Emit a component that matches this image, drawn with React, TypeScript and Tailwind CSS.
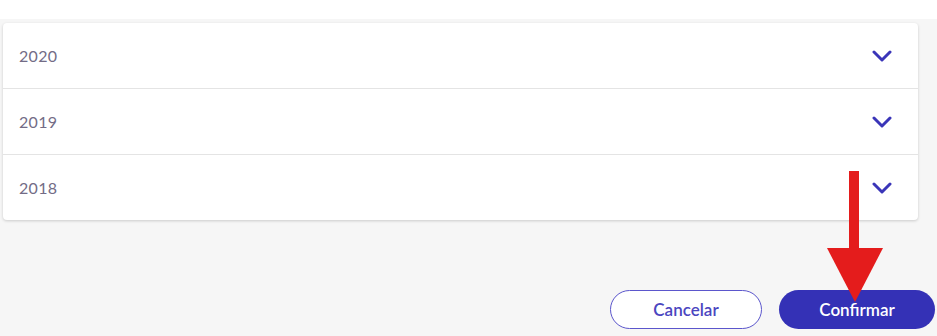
const years = ["2020", "2019", "2018"]

function Chevron() {
  return (
    <svg width="20" height="12" viewBox="0 0 20 12" fill="none">
      <path d="M2 2l8 8 8-8" stroke="#3a35b8" strokeWidth="3" strokeLinecap="round" strokeLinejoin="round" />
    </svg>
  )
}

export default function App() {
  return (
    <div className="relative w-[937px] h-[336px] overflow-hidden bg-white" style={{ fontFamily: "Lato, 'Noto Sans', sans-serif" }}>
      <div className="h-[19px] bg-white" />
      <div className="h-[317px] bg-[#f6f6f6] pt-[4px] pl-[3px] pr-[2px]">
        <div className="w-[915px] bg-white rounded-[4px] shadow-[0_1px_3px_rgba(0,0,0,0.18)] flex flex-col">
          {years.map((y, i) => (
            <div
              key={y}
              className={`flex items-center justify-between pl-[16px] pr-[26px] ${i < years.length - 1 ? "h-[66px] border-b border-[#e4e4e4]" : "h-[65px]"}`}
            >
              <span className="text-[16px] tracking-[0.3px] text-[#736c86]">{y}</span>
              <Chevron />
            </div>
          ))}
        </div>
        <div className="mt-[70px] flex justify-end gap-[17px]">
          <button className="w-[152px] h-[39px] rounded-full border border-[#5b56cc] bg-white text-[17px] font-semibold text-[#4b46bf]">
            Cancelar
          </button>
          <button className="w-[156px] h-[39px] rounded-full bg-[#3431b6] text-[17px] font-semibold text-white">
            Confirmar
          </button>
        </div>
      </div>
      <svg className="absolute left-[826px] top-[171px]" width="58" height="132" viewBox="0 0 58 132">
        <rect x="23" y="0" width="10" height="80" fill="#e41c1c" />
        <polygon points="1,77 57,77 29,131" fill="#e41c1c" />
      </svg>
    </div>
  )
}
